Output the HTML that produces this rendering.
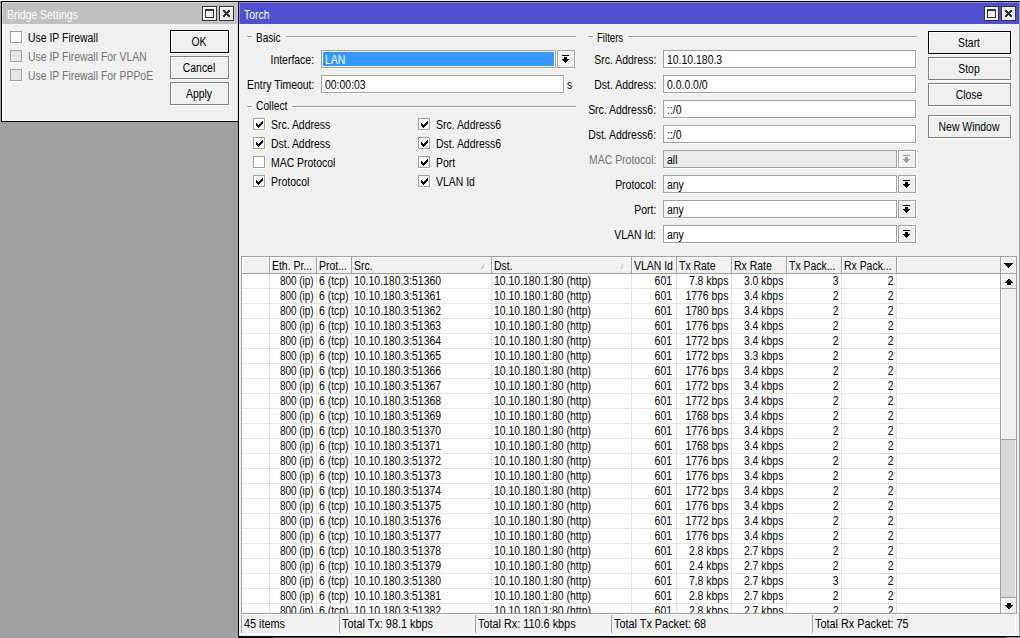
<!DOCTYPE html>
<html><head><meta charset="utf-8"><style>
html,body{margin:0;padding:0;width:1020px;height:638px;overflow:hidden;position:relative;background:#a0a0a0}
body div,body svg,body span{position:absolute;box-sizing:content-box}
.t{font-family:"Liberation Sans",sans-serif;font-size:12px;line-height:12px;white-space:nowrap;color:#000;transform:scaleX(0.87);transform-origin:0 0}
.t.r{transform-origin:100% 0}
.t.c{text-align:center;transform-origin:50% 0}
</style></head><body>
<div style="left:0px;top:0px;width:1020px;height:638px;background:#a0a0a0;"></div>
<div style="left:0px;top:0px;width:1020px;height:1px;background:#f6f6f6;"></div>
<div style="left:1px;top:1px;width:238px;height:121px;background:#000;"></div>
<div style="left:2px;top:2px;width:236px;height:119px;background:#ffffff;"></div>
<div style="left:3px;top:24px;width:234px;height:96px;background:#f0f0f0;"></div>
<div style="left:237px;top:24px;width:1px;height:97px;background:#d9d9d9;"></div>
<div style="left:2px;top:2px;width:236px;height:22px;background:#d4d4d4;"></div>
<div style="left:3px;top:3px;width:234px;height:21px;background:#c0c0c0;"></div>
<span class="t " style="left:7px;top:9px;color:#ffffff;">Bridge Settings</span>
<div style="left:202px;top:6px;width:13px;height:13px;border:1px solid #333333;background:#ececec;"></div>
<div style="left:203px;top:7px;width:13px;height:1px;background:#fff;"></div>
<div style="left:203px;top:7px;width:1px;height:13px;background:#fff;"></div>
<div style="left:205px;top:9px;width:7px;height:7px;border:1px solid #333333;background:#ececec;"></div>
<div style="left:205px;top:9px;width:9px;height:2px;background:#333333;"></div>
<div style="left:219px;top:6px;width:13px;height:13px;border:1px solid #333333;background:#ececec;"></div>
<div style="left:220px;top:7px;width:13px;height:1px;background:#fff;"></div>
<div style="left:220px;top:7px;width:1px;height:13px;background:#fff;"></div>
<svg style="left:223px;top:10px" width="7" height="7" viewBox="0 0 7 7" shape-rendering="crispEdges"><path d="M0 0h2v1h-2zM5 0h2v1h-2zM0 1h3v1h-3zM4 1h3v1h-3zM1 2h5v1h-5zM2 3h3v1h-3zM1 4h5v1h-5zM0 5h3v1h-3zM4 5h3v1h-3zM0 6h2v1h-2zM5 6h2v1h-2z" fill="#333"/></svg>
<div style="left:10px;top:31px;width:13px;height:13px;background:#ffffff;"></div>
<div style="left:10px;top:31px;width:10px;height:10px;border:1px solid #a0a0a0;background:#ffffff;"></div>
<span class="t " style="left:28px;top:32px;color:#000;">Use IP Firewall</span>
<div style="left:10px;top:50px;width:13px;height:13px;background:#ffffff;"></div>
<div style="left:10px;top:50px;width:10px;height:10px;border:1px solid #a0a0a0;background:#e6e6e6;"></div>
<span class="t " style="left:28px;top:51px;color:#737373;">Use IP Firewall For VLAN</span>
<div style="left:10px;top:69px;width:13px;height:13px;background:#ffffff;"></div>
<div style="left:10px;top:69px;width:10px;height:10px;border:1px solid #a0a0a0;background:#e6e6e6;"></div>
<span class="t " style="left:28px;top:70px;color:#737373;">Use IP Firewall For PPPoE</span>
<div style="left:170px;top:30px;width:60px;height:24px;background:#ffffff;"></div>
<div style="left:170px;top:30px;width:57px;height:21px;border:1px solid #000;background:#f0f0f0;"></div>
<div style="left:171px;top:31px;width:57px;height:1px;background:#fff;"></div>
<div style="left:171px;top:31px;width:1px;height:21px;background:#fff;"></div>
<span class="t c " style="left:99px;width:200px;top:36px;color:#000;">OK</span>
<div style="left:170px;top:56px;width:60px;height:24px;background:#ffffff;"></div>
<div style="left:170px;top:56px;width:57px;height:21px;border:1px solid #808080;background:#f0f0f0;"></div>
<div style="left:171px;top:57px;width:57px;height:1px;background:#fff;"></div>
<div style="left:171px;top:57px;width:1px;height:21px;background:#fff;"></div>
<span class="t c " style="left:99px;width:200px;top:62px;color:#000;">Cancel</span>
<div style="left:170px;top:82px;width:60px;height:24px;background:#ffffff;"></div>
<div style="left:170px;top:82px;width:57px;height:21px;border:1px solid #808080;background:#f0f0f0;"></div>
<div style="left:171px;top:83px;width:57px;height:1px;background:#fff;"></div>
<div style="left:171px;top:83px;width:1px;height:21px;background:#fff;"></div>
<span class="t c " style="left:99px;width:200px;top:88px;color:#000;">Apply</span>
<div style="left:238px;top:1px;width:782px;height:637px;background:#000;"></div>
<div style="left:239px;top:2px;width:781px;height:635px;background:#ffffff;"></div>
<div style="left:1019px;top:2px;width:1px;height:635px;background:#a0a0a0;"></div>
<div style="left:239px;top:24px;width:780px;height:611px;background:#f0f0f0;"></div>
<div style="left:239px;top:2px;width:780px;height:22px;background:#8a8add;"></div>
<div style="left:240px;top:3px;width:779px;height:21px;background:#4f50cc;"></div>
<span class="t " style="left:244px;top:9px;color:#ffffff;">Torch</span>
<div style="left:984px;top:6px;width:13px;height:13px;border:1px solid #333333;background:#ececec;"></div>
<div style="left:985px;top:7px;width:13px;height:1px;background:#fff;"></div>
<div style="left:985px;top:7px;width:1px;height:13px;background:#fff;"></div>
<div style="left:987px;top:9px;width:7px;height:7px;border:1px solid #333333;background:#ececec;"></div>
<div style="left:987px;top:9px;width:9px;height:2px;background:#333333;"></div>
<div style="left:1001px;top:6px;width:13px;height:13px;border:1px solid #333333;background:#ececec;"></div>
<div style="left:1002px;top:7px;width:13px;height:1px;background:#fff;"></div>
<div style="left:1002px;top:7px;width:1px;height:13px;background:#fff;"></div>
<svg style="left:1005px;top:10px" width="7" height="7" viewBox="0 0 7 7" shape-rendering="crispEdges"><path d="M0 0h2v1h-2zM5 0h2v1h-2zM0 1h3v1h-3zM4 1h3v1h-3zM1 2h5v1h-5zM2 3h3v1h-3zM1 4h5v1h-5zM0 5h3v1h-3zM4 5h3v1h-3zM0 6h2v1h-2zM5 6h2v1h-2z" fill="#333"/></svg>
<div style="left:247px;top:36px;width:5px;height:1px;background:#a0a0a0;"></div>
<div style="left:247px;top:37px;width:5px;height:1px;background:#fff;"></div>
<div style="left:286px;top:36px;width:290px;height:1px;background:#a0a0a0;"></div>
<div style="left:286px;top:37px;width:290px;height:1px;background:#fff;"></div>
<span class="t " style="left:256px;top:32px;color:#000;transform:scaleX(0.84);">Basic</span>
<div style="left:588px;top:36px;width:5px;height:1px;background:#a0a0a0;"></div>
<div style="left:588px;top:37px;width:5px;height:1px;background:#fff;"></div>
<div style="left:628px;top:36px;width:289px;height:1px;background:#a0a0a0;"></div>
<div style="left:628px;top:37px;width:289px;height:1px;background:#fff;"></div>
<span class="t " style="left:597px;top:32px;color:#000;transform:scaleX(0.8);">Filters</span>
<div style="left:247px;top:106px;width:5px;height:1px;background:#a0a0a0;"></div>
<div style="left:247px;top:107px;width:5px;height:1px;background:#fff;"></div>
<div style="left:292px;top:106px;width:284px;height:1px;background:#a0a0a0;"></div>
<div style="left:292px;top:107px;width:284px;height:1px;background:#fff;"></div>
<span class="t " style="left:256px;top:100px;color:#000;transform:scaleX(0.855);">Collect</span>
<span class="t r " style="right:706px;top:54px;color:#000;">Interface:</span>
<div style="left:321px;top:50px;width:236px;height:19px;background:#fff;"></div>
<div style="left:321px;top:50px;width:233px;height:16px;border:1px solid #a0a0a0;background:#fff;"></div>
<div style="left:323px;top:52px;width:231px;height:14px;background:#3399ff;"></div>
<span class="t " style="left:325px;top:54px;color:#fff;">LAN</span>
<div style="left:557px;top:50px;width:19px;height:19px;background:#fff;"></div>
<div style="left:557px;top:50px;width:16px;height:16px;border:1px solid #a0a0a0;background:#f0f0f0;"></div>
<div style="left:558px;top:51px;width:16px;height:1px;background:#fff;"></div>
<div style="left:558px;top:51px;width:1px;height:16px;background:#fff;"></div>
<svg style="left:562px;top:55px" width="7" height="8" viewBox="0 0 7 8" shape-rendering="crispEdges"><path d="M0 0h7v1h-7zM2 2h3v2h-3zM0 4h7v1h-7zM1 5h5v1h-5zM2 6h3v1h-3zM3 7h1v1h-1z" fill="#000"/></svg>
<span class="t r " style="right:706px;top:79px;color:#000;">Entry Timeout:</span>
<div style="left:321px;top:75px;width:244px;height:19px;background:#fff;"></div>
<div style="left:321px;top:75px;width:241px;height:16px;border:1px solid #a0a0a0;background:#fff;"></div>
<span class="t " style="left:325px;top:79px;color:#000;">00:00:03</span>
<span class="t " style="left:567px;top:79px;color:#000;">s</span>
<div style="left:253px;top:118px;width:13px;height:13px;background:#ffffff;"></div>
<div style="left:253px;top:118px;width:10px;height:10px;border:1px solid #a0a0a0;background:#ffffff;"></div>
<svg style="left:256px;top:121px" width="7" height="7" viewBox="0 0 7 7" shape-rendering="crispEdges"><path d="M6 0h1v1h-1zM5 1h2v1h-2zM0 2h1v1h-1zM4 2h3v1h-3zM0 3h2v1h-2zM3 3h3v1h-3zM0 4h5v1h-5zM1 5h3v1h-3zM2 6h1v1h-1z" fill="#000"/></svg>
<span class="t " style="left:271px;top:119px;color:#000;">Src. Address</span>
<div style="left:253px;top:137px;width:13px;height:13px;background:#ffffff;"></div>
<div style="left:253px;top:137px;width:10px;height:10px;border:1px solid #a0a0a0;background:#ffffff;"></div>
<svg style="left:256px;top:140px" width="7" height="7" viewBox="0 0 7 7" shape-rendering="crispEdges"><path d="M6 0h1v1h-1zM5 1h2v1h-2zM0 2h1v1h-1zM4 2h3v1h-3zM0 3h2v1h-2zM3 3h3v1h-3zM0 4h5v1h-5zM1 5h3v1h-3zM2 6h1v1h-1z" fill="#000"/></svg>
<span class="t " style="left:271px;top:138px;color:#000;">Dst. Address</span>
<div style="left:253px;top:156px;width:13px;height:13px;background:#ffffff;"></div>
<div style="left:253px;top:156px;width:10px;height:10px;border:1px solid #a0a0a0;background:#ffffff;"></div>
<span class="t " style="left:271px;top:157px;color:#000;">MAC Protocol</span>
<div style="left:253px;top:175px;width:13px;height:13px;background:#ffffff;"></div>
<div style="left:253px;top:175px;width:10px;height:10px;border:1px solid #a0a0a0;background:#ffffff;"></div>
<svg style="left:256px;top:178px" width="7" height="7" viewBox="0 0 7 7" shape-rendering="crispEdges"><path d="M6 0h1v1h-1zM5 1h2v1h-2zM0 2h1v1h-1zM4 2h3v1h-3zM0 3h2v1h-2zM3 3h3v1h-3zM0 4h5v1h-5zM1 5h3v1h-3zM2 6h1v1h-1z" fill="#000"/></svg>
<span class="t " style="left:271px;top:176px;color:#000;">Protocol</span>
<div style="left:418px;top:118px;width:13px;height:13px;background:#ffffff;"></div>
<div style="left:418px;top:118px;width:10px;height:10px;border:1px solid #a0a0a0;background:#ffffff;"></div>
<svg style="left:421px;top:121px" width="7" height="7" viewBox="0 0 7 7" shape-rendering="crispEdges"><path d="M6 0h1v1h-1zM5 1h2v1h-2zM0 2h1v1h-1zM4 2h3v1h-3zM0 3h2v1h-2zM3 3h3v1h-3zM0 4h5v1h-5zM1 5h3v1h-3zM2 6h1v1h-1z" fill="#000"/></svg>
<span class="t " style="left:436px;top:119px;color:#000;">Src. Address6</span>
<div style="left:418px;top:137px;width:13px;height:13px;background:#ffffff;"></div>
<div style="left:418px;top:137px;width:10px;height:10px;border:1px solid #a0a0a0;background:#ffffff;"></div>
<svg style="left:421px;top:140px" width="7" height="7" viewBox="0 0 7 7" shape-rendering="crispEdges"><path d="M6 0h1v1h-1zM5 1h2v1h-2zM0 2h1v1h-1zM4 2h3v1h-3zM0 3h2v1h-2zM3 3h3v1h-3zM0 4h5v1h-5zM1 5h3v1h-3zM2 6h1v1h-1z" fill="#000"/></svg>
<span class="t " style="left:436px;top:138px;color:#000;">Dst. Address6</span>
<div style="left:418px;top:156px;width:13px;height:13px;background:#ffffff;"></div>
<div style="left:418px;top:156px;width:10px;height:10px;border:1px solid #a0a0a0;background:#ffffff;"></div>
<svg style="left:421px;top:159px" width="7" height="7" viewBox="0 0 7 7" shape-rendering="crispEdges"><path d="M6 0h1v1h-1zM5 1h2v1h-2zM0 2h1v1h-1zM4 2h3v1h-3zM0 3h2v1h-2zM3 3h3v1h-3zM0 4h5v1h-5zM1 5h3v1h-3zM2 6h1v1h-1z" fill="#000"/></svg>
<span class="t " style="left:436px;top:157px;color:#000;">Port</span>
<div style="left:418px;top:175px;width:13px;height:13px;background:#ffffff;"></div>
<div style="left:418px;top:175px;width:10px;height:10px;border:1px solid #a0a0a0;background:#ffffff;"></div>
<svg style="left:421px;top:178px" width="7" height="7" viewBox="0 0 7 7" shape-rendering="crispEdges"><path d="M6 0h1v1h-1zM5 1h2v1h-2zM0 2h1v1h-1zM4 2h3v1h-3zM0 3h2v1h-2zM3 3h3v1h-3zM0 4h5v1h-5zM1 5h3v1h-3zM2 6h1v1h-1z" fill="#000"/></svg>
<span class="t " style="left:436px;top:176px;color:#000;">VLAN Id</span>
<span class="t r " style="right:364px;top:54px;color:#000;">Src. Address:</span>
<div style="left:663px;top:50px;width:254px;height:19px;background:#fff;"></div>
<div style="left:663px;top:50px;width:251px;height:16px;border:1px solid #a0a0a0;background:#fff;"></div>
<span class="t " style="left:667px;top:54px;color:#000;">10.10.180.3</span>
<span class="t r " style="right:364px;top:79px;color:#000;">Dst. Address:</span>
<div style="left:663px;top:75px;width:254px;height:19px;background:#fff;"></div>
<div style="left:663px;top:75px;width:251px;height:16px;border:1px solid #a0a0a0;background:#fff;"></div>
<span class="t " style="left:667px;top:79px;color:#000;">0.0.0.0/0</span>
<span class="t r " style="right:364px;top:104px;color:#000;">Src. Address6:</span>
<div style="left:663px;top:100px;width:254px;height:19px;background:#fff;"></div>
<div style="left:663px;top:100px;width:251px;height:16px;border:1px solid #a0a0a0;background:#fff;"></div>
<span class="t " style="left:667px;top:104px;color:#000;">::/0</span>
<span class="t r " style="right:364px;top:129px;color:#000;">Dst. Address6:</span>
<div style="left:663px;top:125px;width:254px;height:19px;background:#fff;"></div>
<div style="left:663px;top:125px;width:251px;height:16px;border:1px solid #a0a0a0;background:#fff;"></div>
<span class="t " style="left:667px;top:129px;color:#000;">::/0</span>
<span class="t r " style="right:364px;top:154px;color:#737373;">MAC Protocol:</span>
<div style="left:663px;top:150px;width:235px;height:19px;background:#fff;"></div>
<div style="left:663px;top:150px;width:232px;height:16px;border:1px solid #a0a0a0;background:#ececec;"></div>
<div style="left:898px;top:150px;width:19px;height:19px;background:#fff;"></div>
<div style="left:898px;top:150px;width:16px;height:16px;border:1px solid #a0a0a0;background:#f0f0f0;"></div>
<div style="left:899px;top:151px;width:16px;height:1px;background:#fff;"></div>
<div style="left:899px;top:151px;width:1px;height:16px;background:#fff;"></div>
<svg style="left:903px;top:155px" width="7" height="8" viewBox="0 0 7 8" shape-rendering="crispEdges"><path d="M0 0h7v1h-7zM2 2h3v2h-3zM0 4h7v1h-7zM1 5h5v1h-5zM2 6h3v1h-3zM3 7h1v1h-1z" fill="#a0a0a0"/></svg>
<span class="t " style="left:667px;top:154px;color:#000;">all</span>
<span class="t r " style="right:364px;top:179px;color:#000;">Protocol:</span>
<div style="left:663px;top:175px;width:235px;height:19px;background:#fff;"></div>
<div style="left:663px;top:175px;width:232px;height:16px;border:1px solid #a0a0a0;background:#fff;"></div>
<div style="left:898px;top:175px;width:19px;height:19px;background:#fff;"></div>
<div style="left:898px;top:175px;width:16px;height:16px;border:1px solid #a0a0a0;background:#f0f0f0;"></div>
<div style="left:899px;top:176px;width:16px;height:1px;background:#fff;"></div>
<div style="left:899px;top:176px;width:1px;height:16px;background:#fff;"></div>
<svg style="left:903px;top:180px" width="7" height="8" viewBox="0 0 7 8" shape-rendering="crispEdges"><path d="M0 0h7v1h-7zM2 2h3v2h-3zM0 4h7v1h-7zM1 5h5v1h-5zM2 6h3v1h-3zM3 7h1v1h-1z" fill="#000"/></svg>
<span class="t " style="left:667px;top:179px;color:#000;">any</span>
<span class="t r " style="right:364px;top:204px;color:#000;">Port:</span>
<div style="left:663px;top:200px;width:235px;height:19px;background:#fff;"></div>
<div style="left:663px;top:200px;width:232px;height:16px;border:1px solid #a0a0a0;background:#fff;"></div>
<div style="left:898px;top:200px;width:19px;height:19px;background:#fff;"></div>
<div style="left:898px;top:200px;width:16px;height:16px;border:1px solid #a0a0a0;background:#f0f0f0;"></div>
<div style="left:899px;top:201px;width:16px;height:1px;background:#fff;"></div>
<div style="left:899px;top:201px;width:1px;height:16px;background:#fff;"></div>
<svg style="left:903px;top:205px" width="7" height="8" viewBox="0 0 7 8" shape-rendering="crispEdges"><path d="M0 0h7v1h-7zM2 2h3v2h-3zM0 4h7v1h-7zM1 5h5v1h-5zM2 6h3v1h-3zM3 7h1v1h-1z" fill="#000"/></svg>
<span class="t " style="left:667px;top:204px;color:#000;">any</span>
<span class="t r " style="right:364px;top:229px;color:#000;">VLAN Id:</span>
<div style="left:663px;top:225px;width:235px;height:19px;background:#fff;"></div>
<div style="left:663px;top:225px;width:232px;height:16px;border:1px solid #a0a0a0;background:#fff;"></div>
<div style="left:898px;top:225px;width:19px;height:19px;background:#fff;"></div>
<div style="left:898px;top:225px;width:16px;height:16px;border:1px solid #a0a0a0;background:#f0f0f0;"></div>
<div style="left:899px;top:226px;width:16px;height:1px;background:#fff;"></div>
<div style="left:899px;top:226px;width:1px;height:16px;background:#fff;"></div>
<svg style="left:903px;top:230px" width="7" height="8" viewBox="0 0 7 8" shape-rendering="crispEdges"><path d="M0 0h7v1h-7zM2 2h3v2h-3zM0 4h7v1h-7zM1 5h5v1h-5zM2 6h3v1h-3zM3 7h1v1h-1z" fill="#000"/></svg>
<span class="t " style="left:667px;top:229px;color:#000;">any</span>
<div style="left:928px;top:31px;width:84px;height:24px;background:#ffffff;"></div>
<div style="left:928px;top:31px;width:81px;height:21px;border:1px solid #000;background:#f0f0f0;"></div>
<div style="left:929px;top:32px;width:81px;height:1px;background:#fff;"></div>
<div style="left:929px;top:32px;width:1px;height:21px;background:#fff;"></div>
<span class="t c " style="left:869px;width:200px;top:37px;color:#000;">Start</span>
<div style="left:928px;top:57px;width:84px;height:24px;background:#ffffff;"></div>
<div style="left:928px;top:57px;width:81px;height:21px;border:1px solid #808080;background:#f0f0f0;"></div>
<div style="left:929px;top:58px;width:81px;height:1px;background:#fff;"></div>
<div style="left:929px;top:58px;width:1px;height:21px;background:#fff;"></div>
<span class="t c " style="left:869px;width:200px;top:63px;color:#000;">Stop</span>
<div style="left:928px;top:83px;width:84px;height:24px;background:#ffffff;"></div>
<div style="left:928px;top:83px;width:81px;height:21px;border:1px solid #808080;background:#f0f0f0;"></div>
<div style="left:929px;top:84px;width:81px;height:1px;background:#fff;"></div>
<div style="left:929px;top:84px;width:1px;height:21px;background:#fff;"></div>
<span class="t c " style="left:869px;width:200px;top:89px;color:#000;">Close</span>
<div style="left:928px;top:115px;width:84px;height:24px;background:#ffffff;"></div>
<div style="left:928px;top:115px;width:81px;height:21px;border:1px solid #808080;background:#f0f0f0;"></div>
<div style="left:929px;top:116px;width:81px;height:1px;background:#fff;"></div>
<div style="left:929px;top:116px;width:1px;height:21px;background:#fff;"></div>
<span class="t c " style="left:869px;width:200px;top:121px;color:#000;">New Window</span>
<div style="left:241px;top:256px;width:776px;height:358px;background:#a0a0a0;"></div>
<div style="left:242px;top:257px;width:774px;height:356px;background:#ffffff;"></div>
<div style="left:242px;top:257px;width:774px;height:16px;background:#ffffff;"></div>
<div style="left:243px;top:258px;width:773px;height:15px;background:#f0f0f0;"></div>
<div style="left:242px;top:273px;width:774px;height:1px;background:#a0a0a0;"></div>
<div style="left:269px;top:257px;width:1px;height:16px;background:#a0a0a0;"></div>
<div style="left:270px;top:258px;width:1px;height:15px;background:#ffffff;"></div>
<div style="left:316px;top:257px;width:1px;height:16px;background:#a0a0a0;"></div>
<div style="left:317px;top:258px;width:1px;height:15px;background:#ffffff;"></div>
<div style="left:351px;top:257px;width:1px;height:16px;background:#a0a0a0;"></div>
<div style="left:352px;top:258px;width:1px;height:15px;background:#ffffff;"></div>
<div style="left:491px;top:257px;width:1px;height:16px;background:#a0a0a0;"></div>
<div style="left:492px;top:258px;width:1px;height:15px;background:#ffffff;"></div>
<div style="left:631px;top:257px;width:1px;height:16px;background:#a0a0a0;"></div>
<div style="left:632px;top:258px;width:1px;height:15px;background:#ffffff;"></div>
<div style="left:676px;top:257px;width:1px;height:16px;background:#a0a0a0;"></div>
<div style="left:677px;top:258px;width:1px;height:15px;background:#ffffff;"></div>
<div style="left:731px;top:257px;width:1px;height:16px;background:#a0a0a0;"></div>
<div style="left:732px;top:258px;width:1px;height:15px;background:#ffffff;"></div>
<div style="left:786px;top:257px;width:1px;height:16px;background:#a0a0a0;"></div>
<div style="left:787px;top:258px;width:1px;height:15px;background:#ffffff;"></div>
<div style="left:841px;top:257px;width:1px;height:16px;background:#a0a0a0;"></div>
<div style="left:842px;top:258px;width:1px;height:15px;background:#ffffff;"></div>
<div style="left:896px;top:257px;width:1px;height:16px;background:#a0a0a0;"></div>
<div style="left:897px;top:258px;width:1px;height:15px;background:#ffffff;"></div>
<span class="t " style="left:272px;top:260px;color:#000;">Eth. Pr...</span>
<span class="t " style="left:319px;top:260px;color:#000;">Prot...</span>
<span class="t " style="left:354px;top:260px;color:#000;">Src.</span>
<span class="t " style="left:494px;top:260px;color:#000;">Dst.</span>
<span class="t " style="left:634px;top:260px;color:#000;">VLAN Id</span>
<span class="t " style="left:679px;top:260px;color:#000;">Tx Rate</span>
<span class="t " style="left:734px;top:260px;color:#000;">Rx Rate</span>
<span class="t " style="left:789px;top:260px;color:#000;">Tx Pack...</span>
<span class="t " style="left:844px;top:260px;color:#000;">Rx Pack...</span>
<svg style="left:481px;top:263px" width="8" height="7" viewBox="0 0 8 7"><path d="M0.5 6.5L3.5 0.8" stroke="#b4b4b4" stroke-width="1.1" fill="none"/><path d="M3.5 0.8L7.5 6.5H0.5" stroke="#ffffff" stroke-width="1" fill="none"/></svg>
<svg style="left:620px;top:263px" width="8" height="7" viewBox="0 0 8 7"><path d="M0.5 6.5L3.5 0.8" stroke="#b4b4b4" stroke-width="1.1" fill="none"/><path d="M3.5 0.8L7.5 6.5H0.5" stroke="#ffffff" stroke-width="1" fill="none"/></svg>
<div style="left:1000px;top:257px;width:1px;height:16px;background:#a0a0a0;"></div>
<div style="left:1001px;top:258px;width:1px;height:15px;background:#fff;"></div>
<svg style="left:1004px;top:263px" width="9" height="5" viewBox="0 0 9 5" shape-rendering="crispEdges"><path d="M0 0h9v1h-9zM1 1h7v1h-7zM2 2h5v1h-5zM3 3h3v1h-3zM4 4h1v1h-1z" fill="#000"/></svg>
<div style="left:242px;top:274px;width:758px;height:339px;overflow:hidden">
<div style="left:0;top:14px;width:758px;height:1px;background:#e3e3e3"></div>
<div style="left:27px;top:0px;width:1px;height:15px;background:#e3e3e3"></div>
<div style="left:74px;top:0px;width:1px;height:15px;background:#e3e3e3"></div>
<div style="left:109px;top:0px;width:1px;height:15px;background:#e3e3e3"></div>
<div style="left:249px;top:0px;width:1px;height:15px;background:#e3e3e3"></div>
<div style="left:389px;top:0px;width:1px;height:15px;background:#e3e3e3"></div>
<div style="left:434px;top:0px;width:1px;height:15px;background:#e3e3e3"></div>
<div style="left:489px;top:0px;width:1px;height:15px;background:#e3e3e3"></div>
<div style="left:544px;top:0px;width:1px;height:15px;background:#e3e3e3"></div>
<div style="left:599px;top:0px;width:1px;height:15px;background:#e3e3e3"></div>
<div style="left:654px;top:0px;width:1px;height:15px;background:#e3e3e3"></div>
<span class="t r" style="right:686px;top:1px;transform:scaleX(0.83);">800 (ip)</span>
<span class="t" style="left:77px;top:1px">6 (tcp)</span>
<span class="t" style="left:112px;top:1px">10.10.180.3:51360</span>
<span class="t" style="left:252px;top:1px">10.10.180.1:80 (http)</span>
<span class="t r" style="right:328px;top:1px;">601</span>
<span class="t r" style="right:272px;top:1px;">7.8 kbps</span>
<span class="t r" style="right:217px;top:1px;">3.0 kbps</span>
<span class="t r" style="right:161px;top:1px;">3</span>
<span class="t r" style="right:106px;top:1px;">2</span>
<div style="left:0;top:29px;width:758px;height:1px;background:#e3e3e3"></div>
<div style="left:27px;top:15px;width:1px;height:15px;background:#e3e3e3"></div>
<div style="left:74px;top:15px;width:1px;height:15px;background:#e3e3e3"></div>
<div style="left:109px;top:15px;width:1px;height:15px;background:#e3e3e3"></div>
<div style="left:249px;top:15px;width:1px;height:15px;background:#e3e3e3"></div>
<div style="left:389px;top:15px;width:1px;height:15px;background:#e3e3e3"></div>
<div style="left:434px;top:15px;width:1px;height:15px;background:#e3e3e3"></div>
<div style="left:489px;top:15px;width:1px;height:15px;background:#e3e3e3"></div>
<div style="left:544px;top:15px;width:1px;height:15px;background:#e3e3e3"></div>
<div style="left:599px;top:15px;width:1px;height:15px;background:#e3e3e3"></div>
<div style="left:654px;top:15px;width:1px;height:15px;background:#e3e3e3"></div>
<span class="t r" style="right:686px;top:16px;transform:scaleX(0.83);">800 (ip)</span>
<span class="t" style="left:77px;top:16px">6 (tcp)</span>
<span class="t" style="left:112px;top:16px">10.10.180.3:51361</span>
<span class="t" style="left:252px;top:16px">10.10.180.1:80 (http)</span>
<span class="t r" style="right:328px;top:16px;">601</span>
<span class="t r" style="right:272px;top:16px;">1776 bps</span>
<span class="t r" style="right:217px;top:16px;">3.4 kbps</span>
<span class="t r" style="right:161px;top:16px;">2</span>
<span class="t r" style="right:106px;top:16px;">2</span>
<div style="left:0;top:44px;width:758px;height:1px;background:#e3e3e3"></div>
<div style="left:27px;top:30px;width:1px;height:15px;background:#e3e3e3"></div>
<div style="left:74px;top:30px;width:1px;height:15px;background:#e3e3e3"></div>
<div style="left:109px;top:30px;width:1px;height:15px;background:#e3e3e3"></div>
<div style="left:249px;top:30px;width:1px;height:15px;background:#e3e3e3"></div>
<div style="left:389px;top:30px;width:1px;height:15px;background:#e3e3e3"></div>
<div style="left:434px;top:30px;width:1px;height:15px;background:#e3e3e3"></div>
<div style="left:489px;top:30px;width:1px;height:15px;background:#e3e3e3"></div>
<div style="left:544px;top:30px;width:1px;height:15px;background:#e3e3e3"></div>
<div style="left:599px;top:30px;width:1px;height:15px;background:#e3e3e3"></div>
<div style="left:654px;top:30px;width:1px;height:15px;background:#e3e3e3"></div>
<span class="t r" style="right:686px;top:31px;transform:scaleX(0.83);">800 (ip)</span>
<span class="t" style="left:77px;top:31px">6 (tcp)</span>
<span class="t" style="left:112px;top:31px">10.10.180.3:51362</span>
<span class="t" style="left:252px;top:31px">10.10.180.1:80 (http)</span>
<span class="t r" style="right:328px;top:31px;">601</span>
<span class="t r" style="right:272px;top:31px;">1780 bps</span>
<span class="t r" style="right:217px;top:31px;">3.4 kbps</span>
<span class="t r" style="right:161px;top:31px;">2</span>
<span class="t r" style="right:106px;top:31px;">2</span>
<div style="left:0;top:59px;width:758px;height:1px;background:#e3e3e3"></div>
<div style="left:27px;top:45px;width:1px;height:15px;background:#e3e3e3"></div>
<div style="left:74px;top:45px;width:1px;height:15px;background:#e3e3e3"></div>
<div style="left:109px;top:45px;width:1px;height:15px;background:#e3e3e3"></div>
<div style="left:249px;top:45px;width:1px;height:15px;background:#e3e3e3"></div>
<div style="left:389px;top:45px;width:1px;height:15px;background:#e3e3e3"></div>
<div style="left:434px;top:45px;width:1px;height:15px;background:#e3e3e3"></div>
<div style="left:489px;top:45px;width:1px;height:15px;background:#e3e3e3"></div>
<div style="left:544px;top:45px;width:1px;height:15px;background:#e3e3e3"></div>
<div style="left:599px;top:45px;width:1px;height:15px;background:#e3e3e3"></div>
<div style="left:654px;top:45px;width:1px;height:15px;background:#e3e3e3"></div>
<span class="t r" style="right:686px;top:46px;transform:scaleX(0.83);">800 (ip)</span>
<span class="t" style="left:77px;top:46px">6 (tcp)</span>
<span class="t" style="left:112px;top:46px">10.10.180.3:51363</span>
<span class="t" style="left:252px;top:46px">10.10.180.1:80 (http)</span>
<span class="t r" style="right:328px;top:46px;">601</span>
<span class="t r" style="right:272px;top:46px;">1776 bps</span>
<span class="t r" style="right:217px;top:46px;">3.4 kbps</span>
<span class="t r" style="right:161px;top:46px;">2</span>
<span class="t r" style="right:106px;top:46px;">2</span>
<div style="left:0;top:74px;width:758px;height:1px;background:#e3e3e3"></div>
<div style="left:27px;top:60px;width:1px;height:15px;background:#e3e3e3"></div>
<div style="left:74px;top:60px;width:1px;height:15px;background:#e3e3e3"></div>
<div style="left:109px;top:60px;width:1px;height:15px;background:#e3e3e3"></div>
<div style="left:249px;top:60px;width:1px;height:15px;background:#e3e3e3"></div>
<div style="left:389px;top:60px;width:1px;height:15px;background:#e3e3e3"></div>
<div style="left:434px;top:60px;width:1px;height:15px;background:#e3e3e3"></div>
<div style="left:489px;top:60px;width:1px;height:15px;background:#e3e3e3"></div>
<div style="left:544px;top:60px;width:1px;height:15px;background:#e3e3e3"></div>
<div style="left:599px;top:60px;width:1px;height:15px;background:#e3e3e3"></div>
<div style="left:654px;top:60px;width:1px;height:15px;background:#e3e3e3"></div>
<span class="t r" style="right:686px;top:61px;transform:scaleX(0.83);">800 (ip)</span>
<span class="t" style="left:77px;top:61px">6 (tcp)</span>
<span class="t" style="left:112px;top:61px">10.10.180.3:51364</span>
<span class="t" style="left:252px;top:61px">10.10.180.1:80 (http)</span>
<span class="t r" style="right:328px;top:61px;">601</span>
<span class="t r" style="right:272px;top:61px;">1772 bps</span>
<span class="t r" style="right:217px;top:61px;">3.4 kbps</span>
<span class="t r" style="right:161px;top:61px;">2</span>
<span class="t r" style="right:106px;top:61px;">2</span>
<div style="left:0;top:89px;width:758px;height:1px;background:#e3e3e3"></div>
<div style="left:27px;top:75px;width:1px;height:15px;background:#e3e3e3"></div>
<div style="left:74px;top:75px;width:1px;height:15px;background:#e3e3e3"></div>
<div style="left:109px;top:75px;width:1px;height:15px;background:#e3e3e3"></div>
<div style="left:249px;top:75px;width:1px;height:15px;background:#e3e3e3"></div>
<div style="left:389px;top:75px;width:1px;height:15px;background:#e3e3e3"></div>
<div style="left:434px;top:75px;width:1px;height:15px;background:#e3e3e3"></div>
<div style="left:489px;top:75px;width:1px;height:15px;background:#e3e3e3"></div>
<div style="left:544px;top:75px;width:1px;height:15px;background:#e3e3e3"></div>
<div style="left:599px;top:75px;width:1px;height:15px;background:#e3e3e3"></div>
<div style="left:654px;top:75px;width:1px;height:15px;background:#e3e3e3"></div>
<span class="t r" style="right:686px;top:76px;transform:scaleX(0.83);">800 (ip)</span>
<span class="t" style="left:77px;top:76px">6 (tcp)</span>
<span class="t" style="left:112px;top:76px">10.10.180.3:51365</span>
<span class="t" style="left:252px;top:76px">10.10.180.1:80 (http)</span>
<span class="t r" style="right:328px;top:76px;">601</span>
<span class="t r" style="right:272px;top:76px;">1772 bps</span>
<span class="t r" style="right:217px;top:76px;">3.3 kbps</span>
<span class="t r" style="right:161px;top:76px;">2</span>
<span class="t r" style="right:106px;top:76px;">2</span>
<div style="left:0;top:104px;width:758px;height:1px;background:#e3e3e3"></div>
<div style="left:27px;top:90px;width:1px;height:15px;background:#e3e3e3"></div>
<div style="left:74px;top:90px;width:1px;height:15px;background:#e3e3e3"></div>
<div style="left:109px;top:90px;width:1px;height:15px;background:#e3e3e3"></div>
<div style="left:249px;top:90px;width:1px;height:15px;background:#e3e3e3"></div>
<div style="left:389px;top:90px;width:1px;height:15px;background:#e3e3e3"></div>
<div style="left:434px;top:90px;width:1px;height:15px;background:#e3e3e3"></div>
<div style="left:489px;top:90px;width:1px;height:15px;background:#e3e3e3"></div>
<div style="left:544px;top:90px;width:1px;height:15px;background:#e3e3e3"></div>
<div style="left:599px;top:90px;width:1px;height:15px;background:#e3e3e3"></div>
<div style="left:654px;top:90px;width:1px;height:15px;background:#e3e3e3"></div>
<span class="t r" style="right:686px;top:91px;transform:scaleX(0.83);">800 (ip)</span>
<span class="t" style="left:77px;top:91px">6 (tcp)</span>
<span class="t" style="left:112px;top:91px">10.10.180.3:51366</span>
<span class="t" style="left:252px;top:91px">10.10.180.1:80 (http)</span>
<span class="t r" style="right:328px;top:91px;">601</span>
<span class="t r" style="right:272px;top:91px;">1776 bps</span>
<span class="t r" style="right:217px;top:91px;">3.4 kbps</span>
<span class="t r" style="right:161px;top:91px;">2</span>
<span class="t r" style="right:106px;top:91px;">2</span>
<div style="left:0;top:119px;width:758px;height:1px;background:#e3e3e3"></div>
<div style="left:27px;top:105px;width:1px;height:15px;background:#e3e3e3"></div>
<div style="left:74px;top:105px;width:1px;height:15px;background:#e3e3e3"></div>
<div style="left:109px;top:105px;width:1px;height:15px;background:#e3e3e3"></div>
<div style="left:249px;top:105px;width:1px;height:15px;background:#e3e3e3"></div>
<div style="left:389px;top:105px;width:1px;height:15px;background:#e3e3e3"></div>
<div style="left:434px;top:105px;width:1px;height:15px;background:#e3e3e3"></div>
<div style="left:489px;top:105px;width:1px;height:15px;background:#e3e3e3"></div>
<div style="left:544px;top:105px;width:1px;height:15px;background:#e3e3e3"></div>
<div style="left:599px;top:105px;width:1px;height:15px;background:#e3e3e3"></div>
<div style="left:654px;top:105px;width:1px;height:15px;background:#e3e3e3"></div>
<span class="t r" style="right:686px;top:106px;transform:scaleX(0.83);">800 (ip)</span>
<span class="t" style="left:77px;top:106px">6 (tcp)</span>
<span class="t" style="left:112px;top:106px">10.10.180.3:51367</span>
<span class="t" style="left:252px;top:106px">10.10.180.1:80 (http)</span>
<span class="t r" style="right:328px;top:106px;">601</span>
<span class="t r" style="right:272px;top:106px;">1772 bps</span>
<span class="t r" style="right:217px;top:106px;">3.4 kbps</span>
<span class="t r" style="right:161px;top:106px;">2</span>
<span class="t r" style="right:106px;top:106px;">2</span>
<div style="left:0;top:134px;width:758px;height:1px;background:#e3e3e3"></div>
<div style="left:27px;top:120px;width:1px;height:15px;background:#e3e3e3"></div>
<div style="left:74px;top:120px;width:1px;height:15px;background:#e3e3e3"></div>
<div style="left:109px;top:120px;width:1px;height:15px;background:#e3e3e3"></div>
<div style="left:249px;top:120px;width:1px;height:15px;background:#e3e3e3"></div>
<div style="left:389px;top:120px;width:1px;height:15px;background:#e3e3e3"></div>
<div style="left:434px;top:120px;width:1px;height:15px;background:#e3e3e3"></div>
<div style="left:489px;top:120px;width:1px;height:15px;background:#e3e3e3"></div>
<div style="left:544px;top:120px;width:1px;height:15px;background:#e3e3e3"></div>
<div style="left:599px;top:120px;width:1px;height:15px;background:#e3e3e3"></div>
<div style="left:654px;top:120px;width:1px;height:15px;background:#e3e3e3"></div>
<span class="t r" style="right:686px;top:121px;transform:scaleX(0.83);">800 (ip)</span>
<span class="t" style="left:77px;top:121px">6 (tcp)</span>
<span class="t" style="left:112px;top:121px">10.10.180.3:51368</span>
<span class="t" style="left:252px;top:121px">10.10.180.1:80 (http)</span>
<span class="t r" style="right:328px;top:121px;">601</span>
<span class="t r" style="right:272px;top:121px;">1772 bps</span>
<span class="t r" style="right:217px;top:121px;">3.4 kbps</span>
<span class="t r" style="right:161px;top:121px;">2</span>
<span class="t r" style="right:106px;top:121px;">2</span>
<div style="left:0;top:149px;width:758px;height:1px;background:#e3e3e3"></div>
<div style="left:27px;top:135px;width:1px;height:15px;background:#e3e3e3"></div>
<div style="left:74px;top:135px;width:1px;height:15px;background:#e3e3e3"></div>
<div style="left:109px;top:135px;width:1px;height:15px;background:#e3e3e3"></div>
<div style="left:249px;top:135px;width:1px;height:15px;background:#e3e3e3"></div>
<div style="left:389px;top:135px;width:1px;height:15px;background:#e3e3e3"></div>
<div style="left:434px;top:135px;width:1px;height:15px;background:#e3e3e3"></div>
<div style="left:489px;top:135px;width:1px;height:15px;background:#e3e3e3"></div>
<div style="left:544px;top:135px;width:1px;height:15px;background:#e3e3e3"></div>
<div style="left:599px;top:135px;width:1px;height:15px;background:#e3e3e3"></div>
<div style="left:654px;top:135px;width:1px;height:15px;background:#e3e3e3"></div>
<span class="t r" style="right:686px;top:136px;transform:scaleX(0.83);">800 (ip)</span>
<span class="t" style="left:77px;top:136px">6 (tcp)</span>
<span class="t" style="left:112px;top:136px">10.10.180.3:51369</span>
<span class="t" style="left:252px;top:136px">10.10.180.1:80 (http)</span>
<span class="t r" style="right:328px;top:136px;">601</span>
<span class="t r" style="right:272px;top:136px;">1768 bps</span>
<span class="t r" style="right:217px;top:136px;">3.4 kbps</span>
<span class="t r" style="right:161px;top:136px;">2</span>
<span class="t r" style="right:106px;top:136px;">2</span>
<div style="left:0;top:164px;width:758px;height:1px;background:#e3e3e3"></div>
<div style="left:27px;top:150px;width:1px;height:15px;background:#e3e3e3"></div>
<div style="left:74px;top:150px;width:1px;height:15px;background:#e3e3e3"></div>
<div style="left:109px;top:150px;width:1px;height:15px;background:#e3e3e3"></div>
<div style="left:249px;top:150px;width:1px;height:15px;background:#e3e3e3"></div>
<div style="left:389px;top:150px;width:1px;height:15px;background:#e3e3e3"></div>
<div style="left:434px;top:150px;width:1px;height:15px;background:#e3e3e3"></div>
<div style="left:489px;top:150px;width:1px;height:15px;background:#e3e3e3"></div>
<div style="left:544px;top:150px;width:1px;height:15px;background:#e3e3e3"></div>
<div style="left:599px;top:150px;width:1px;height:15px;background:#e3e3e3"></div>
<div style="left:654px;top:150px;width:1px;height:15px;background:#e3e3e3"></div>
<span class="t r" style="right:686px;top:151px;transform:scaleX(0.83);">800 (ip)</span>
<span class="t" style="left:77px;top:151px">6 (tcp)</span>
<span class="t" style="left:112px;top:151px">10.10.180.3:51370</span>
<span class="t" style="left:252px;top:151px">10.10.180.1:80 (http)</span>
<span class="t r" style="right:328px;top:151px;">601</span>
<span class="t r" style="right:272px;top:151px;">1776 bps</span>
<span class="t r" style="right:217px;top:151px;">3.4 kbps</span>
<span class="t r" style="right:161px;top:151px;">2</span>
<span class="t r" style="right:106px;top:151px;">2</span>
<div style="left:0;top:179px;width:758px;height:1px;background:#e3e3e3"></div>
<div style="left:27px;top:165px;width:1px;height:15px;background:#e3e3e3"></div>
<div style="left:74px;top:165px;width:1px;height:15px;background:#e3e3e3"></div>
<div style="left:109px;top:165px;width:1px;height:15px;background:#e3e3e3"></div>
<div style="left:249px;top:165px;width:1px;height:15px;background:#e3e3e3"></div>
<div style="left:389px;top:165px;width:1px;height:15px;background:#e3e3e3"></div>
<div style="left:434px;top:165px;width:1px;height:15px;background:#e3e3e3"></div>
<div style="left:489px;top:165px;width:1px;height:15px;background:#e3e3e3"></div>
<div style="left:544px;top:165px;width:1px;height:15px;background:#e3e3e3"></div>
<div style="left:599px;top:165px;width:1px;height:15px;background:#e3e3e3"></div>
<div style="left:654px;top:165px;width:1px;height:15px;background:#e3e3e3"></div>
<span class="t r" style="right:686px;top:166px;transform:scaleX(0.83);">800 (ip)</span>
<span class="t" style="left:77px;top:166px">6 (tcp)</span>
<span class="t" style="left:112px;top:166px">10.10.180.3:51371</span>
<span class="t" style="left:252px;top:166px">10.10.180.1:80 (http)</span>
<span class="t r" style="right:328px;top:166px;">601</span>
<span class="t r" style="right:272px;top:166px;">1768 bps</span>
<span class="t r" style="right:217px;top:166px;">3.4 kbps</span>
<span class="t r" style="right:161px;top:166px;">2</span>
<span class="t r" style="right:106px;top:166px;">2</span>
<div style="left:0;top:194px;width:758px;height:1px;background:#e3e3e3"></div>
<div style="left:27px;top:180px;width:1px;height:15px;background:#e3e3e3"></div>
<div style="left:74px;top:180px;width:1px;height:15px;background:#e3e3e3"></div>
<div style="left:109px;top:180px;width:1px;height:15px;background:#e3e3e3"></div>
<div style="left:249px;top:180px;width:1px;height:15px;background:#e3e3e3"></div>
<div style="left:389px;top:180px;width:1px;height:15px;background:#e3e3e3"></div>
<div style="left:434px;top:180px;width:1px;height:15px;background:#e3e3e3"></div>
<div style="left:489px;top:180px;width:1px;height:15px;background:#e3e3e3"></div>
<div style="left:544px;top:180px;width:1px;height:15px;background:#e3e3e3"></div>
<div style="left:599px;top:180px;width:1px;height:15px;background:#e3e3e3"></div>
<div style="left:654px;top:180px;width:1px;height:15px;background:#e3e3e3"></div>
<span class="t r" style="right:686px;top:181px;transform:scaleX(0.83);">800 (ip)</span>
<span class="t" style="left:77px;top:181px">6 (tcp)</span>
<span class="t" style="left:112px;top:181px">10.10.180.3:51372</span>
<span class="t" style="left:252px;top:181px">10.10.180.1:80 (http)</span>
<span class="t r" style="right:328px;top:181px;">601</span>
<span class="t r" style="right:272px;top:181px;">1776 bps</span>
<span class="t r" style="right:217px;top:181px;">3.4 kbps</span>
<span class="t r" style="right:161px;top:181px;">2</span>
<span class="t r" style="right:106px;top:181px;">2</span>
<div style="left:0;top:209px;width:758px;height:1px;background:#e3e3e3"></div>
<div style="left:27px;top:195px;width:1px;height:15px;background:#e3e3e3"></div>
<div style="left:74px;top:195px;width:1px;height:15px;background:#e3e3e3"></div>
<div style="left:109px;top:195px;width:1px;height:15px;background:#e3e3e3"></div>
<div style="left:249px;top:195px;width:1px;height:15px;background:#e3e3e3"></div>
<div style="left:389px;top:195px;width:1px;height:15px;background:#e3e3e3"></div>
<div style="left:434px;top:195px;width:1px;height:15px;background:#e3e3e3"></div>
<div style="left:489px;top:195px;width:1px;height:15px;background:#e3e3e3"></div>
<div style="left:544px;top:195px;width:1px;height:15px;background:#e3e3e3"></div>
<div style="left:599px;top:195px;width:1px;height:15px;background:#e3e3e3"></div>
<div style="left:654px;top:195px;width:1px;height:15px;background:#e3e3e3"></div>
<span class="t r" style="right:686px;top:196px;transform:scaleX(0.83);">800 (ip)</span>
<span class="t" style="left:77px;top:196px">6 (tcp)</span>
<span class="t" style="left:112px;top:196px">10.10.180.3:51373</span>
<span class="t" style="left:252px;top:196px">10.10.180.1:80 (http)</span>
<span class="t r" style="right:328px;top:196px;">601</span>
<span class="t r" style="right:272px;top:196px;">1776 bps</span>
<span class="t r" style="right:217px;top:196px;">3.4 kbps</span>
<span class="t r" style="right:161px;top:196px;">2</span>
<span class="t r" style="right:106px;top:196px;">2</span>
<div style="left:0;top:224px;width:758px;height:1px;background:#e3e3e3"></div>
<div style="left:27px;top:210px;width:1px;height:15px;background:#e3e3e3"></div>
<div style="left:74px;top:210px;width:1px;height:15px;background:#e3e3e3"></div>
<div style="left:109px;top:210px;width:1px;height:15px;background:#e3e3e3"></div>
<div style="left:249px;top:210px;width:1px;height:15px;background:#e3e3e3"></div>
<div style="left:389px;top:210px;width:1px;height:15px;background:#e3e3e3"></div>
<div style="left:434px;top:210px;width:1px;height:15px;background:#e3e3e3"></div>
<div style="left:489px;top:210px;width:1px;height:15px;background:#e3e3e3"></div>
<div style="left:544px;top:210px;width:1px;height:15px;background:#e3e3e3"></div>
<div style="left:599px;top:210px;width:1px;height:15px;background:#e3e3e3"></div>
<div style="left:654px;top:210px;width:1px;height:15px;background:#e3e3e3"></div>
<span class="t r" style="right:686px;top:211px;transform:scaleX(0.83);">800 (ip)</span>
<span class="t" style="left:77px;top:211px">6 (tcp)</span>
<span class="t" style="left:112px;top:211px">10.10.180.3:51374</span>
<span class="t" style="left:252px;top:211px">10.10.180.1:80 (http)</span>
<span class="t r" style="right:328px;top:211px;">601</span>
<span class="t r" style="right:272px;top:211px;">1772 bps</span>
<span class="t r" style="right:217px;top:211px;">3.4 kbps</span>
<span class="t r" style="right:161px;top:211px;">2</span>
<span class="t r" style="right:106px;top:211px;">2</span>
<div style="left:0;top:239px;width:758px;height:1px;background:#e3e3e3"></div>
<div style="left:27px;top:225px;width:1px;height:15px;background:#e3e3e3"></div>
<div style="left:74px;top:225px;width:1px;height:15px;background:#e3e3e3"></div>
<div style="left:109px;top:225px;width:1px;height:15px;background:#e3e3e3"></div>
<div style="left:249px;top:225px;width:1px;height:15px;background:#e3e3e3"></div>
<div style="left:389px;top:225px;width:1px;height:15px;background:#e3e3e3"></div>
<div style="left:434px;top:225px;width:1px;height:15px;background:#e3e3e3"></div>
<div style="left:489px;top:225px;width:1px;height:15px;background:#e3e3e3"></div>
<div style="left:544px;top:225px;width:1px;height:15px;background:#e3e3e3"></div>
<div style="left:599px;top:225px;width:1px;height:15px;background:#e3e3e3"></div>
<div style="left:654px;top:225px;width:1px;height:15px;background:#e3e3e3"></div>
<span class="t r" style="right:686px;top:226px;transform:scaleX(0.83);">800 (ip)</span>
<span class="t" style="left:77px;top:226px">6 (tcp)</span>
<span class="t" style="left:112px;top:226px">10.10.180.3:51375</span>
<span class="t" style="left:252px;top:226px">10.10.180.1:80 (http)</span>
<span class="t r" style="right:328px;top:226px;">601</span>
<span class="t r" style="right:272px;top:226px;">1776 bps</span>
<span class="t r" style="right:217px;top:226px;">3.4 kbps</span>
<span class="t r" style="right:161px;top:226px;">2</span>
<span class="t r" style="right:106px;top:226px;">2</span>
<div style="left:0;top:254px;width:758px;height:1px;background:#e3e3e3"></div>
<div style="left:27px;top:240px;width:1px;height:15px;background:#e3e3e3"></div>
<div style="left:74px;top:240px;width:1px;height:15px;background:#e3e3e3"></div>
<div style="left:109px;top:240px;width:1px;height:15px;background:#e3e3e3"></div>
<div style="left:249px;top:240px;width:1px;height:15px;background:#e3e3e3"></div>
<div style="left:389px;top:240px;width:1px;height:15px;background:#e3e3e3"></div>
<div style="left:434px;top:240px;width:1px;height:15px;background:#e3e3e3"></div>
<div style="left:489px;top:240px;width:1px;height:15px;background:#e3e3e3"></div>
<div style="left:544px;top:240px;width:1px;height:15px;background:#e3e3e3"></div>
<div style="left:599px;top:240px;width:1px;height:15px;background:#e3e3e3"></div>
<div style="left:654px;top:240px;width:1px;height:15px;background:#e3e3e3"></div>
<span class="t r" style="right:686px;top:241px;transform:scaleX(0.83);">800 (ip)</span>
<span class="t" style="left:77px;top:241px">6 (tcp)</span>
<span class="t" style="left:112px;top:241px">10.10.180.3:51376</span>
<span class="t" style="left:252px;top:241px">10.10.180.1:80 (http)</span>
<span class="t r" style="right:328px;top:241px;">601</span>
<span class="t r" style="right:272px;top:241px;">1772 bps</span>
<span class="t r" style="right:217px;top:241px;">3.4 kbps</span>
<span class="t r" style="right:161px;top:241px;">2</span>
<span class="t r" style="right:106px;top:241px;">2</span>
<div style="left:0;top:269px;width:758px;height:1px;background:#e3e3e3"></div>
<div style="left:27px;top:255px;width:1px;height:15px;background:#e3e3e3"></div>
<div style="left:74px;top:255px;width:1px;height:15px;background:#e3e3e3"></div>
<div style="left:109px;top:255px;width:1px;height:15px;background:#e3e3e3"></div>
<div style="left:249px;top:255px;width:1px;height:15px;background:#e3e3e3"></div>
<div style="left:389px;top:255px;width:1px;height:15px;background:#e3e3e3"></div>
<div style="left:434px;top:255px;width:1px;height:15px;background:#e3e3e3"></div>
<div style="left:489px;top:255px;width:1px;height:15px;background:#e3e3e3"></div>
<div style="left:544px;top:255px;width:1px;height:15px;background:#e3e3e3"></div>
<div style="left:599px;top:255px;width:1px;height:15px;background:#e3e3e3"></div>
<div style="left:654px;top:255px;width:1px;height:15px;background:#e3e3e3"></div>
<span class="t r" style="right:686px;top:256px;transform:scaleX(0.83);">800 (ip)</span>
<span class="t" style="left:77px;top:256px">6 (tcp)</span>
<span class="t" style="left:112px;top:256px">10.10.180.3:51377</span>
<span class="t" style="left:252px;top:256px">10.10.180.1:80 (http)</span>
<span class="t r" style="right:328px;top:256px;">601</span>
<span class="t r" style="right:272px;top:256px;">1776 bps</span>
<span class="t r" style="right:217px;top:256px;">3.4 kbps</span>
<span class="t r" style="right:161px;top:256px;">2</span>
<span class="t r" style="right:106px;top:256px;">2</span>
<div style="left:0;top:284px;width:758px;height:1px;background:#e3e3e3"></div>
<div style="left:27px;top:270px;width:1px;height:15px;background:#e3e3e3"></div>
<div style="left:74px;top:270px;width:1px;height:15px;background:#e3e3e3"></div>
<div style="left:109px;top:270px;width:1px;height:15px;background:#e3e3e3"></div>
<div style="left:249px;top:270px;width:1px;height:15px;background:#e3e3e3"></div>
<div style="left:389px;top:270px;width:1px;height:15px;background:#e3e3e3"></div>
<div style="left:434px;top:270px;width:1px;height:15px;background:#e3e3e3"></div>
<div style="left:489px;top:270px;width:1px;height:15px;background:#e3e3e3"></div>
<div style="left:544px;top:270px;width:1px;height:15px;background:#e3e3e3"></div>
<div style="left:599px;top:270px;width:1px;height:15px;background:#e3e3e3"></div>
<div style="left:654px;top:270px;width:1px;height:15px;background:#e3e3e3"></div>
<span class="t r" style="right:686px;top:271px;transform:scaleX(0.83);">800 (ip)</span>
<span class="t" style="left:77px;top:271px">6 (tcp)</span>
<span class="t" style="left:112px;top:271px">10.10.180.3:51378</span>
<span class="t" style="left:252px;top:271px">10.10.180.1:80 (http)</span>
<span class="t r" style="right:328px;top:271px;">601</span>
<span class="t r" style="right:272px;top:271px;">2.8 kbps</span>
<span class="t r" style="right:217px;top:271px;">2.7 kbps</span>
<span class="t r" style="right:161px;top:271px;">2</span>
<span class="t r" style="right:106px;top:271px;">2</span>
<div style="left:0;top:299px;width:758px;height:1px;background:#e3e3e3"></div>
<div style="left:27px;top:285px;width:1px;height:15px;background:#e3e3e3"></div>
<div style="left:74px;top:285px;width:1px;height:15px;background:#e3e3e3"></div>
<div style="left:109px;top:285px;width:1px;height:15px;background:#e3e3e3"></div>
<div style="left:249px;top:285px;width:1px;height:15px;background:#e3e3e3"></div>
<div style="left:389px;top:285px;width:1px;height:15px;background:#e3e3e3"></div>
<div style="left:434px;top:285px;width:1px;height:15px;background:#e3e3e3"></div>
<div style="left:489px;top:285px;width:1px;height:15px;background:#e3e3e3"></div>
<div style="left:544px;top:285px;width:1px;height:15px;background:#e3e3e3"></div>
<div style="left:599px;top:285px;width:1px;height:15px;background:#e3e3e3"></div>
<div style="left:654px;top:285px;width:1px;height:15px;background:#e3e3e3"></div>
<span class="t r" style="right:686px;top:286px;transform:scaleX(0.83);">800 (ip)</span>
<span class="t" style="left:77px;top:286px">6 (tcp)</span>
<span class="t" style="left:112px;top:286px">10.10.180.3:51379</span>
<span class="t" style="left:252px;top:286px">10.10.180.1:80 (http)</span>
<span class="t r" style="right:328px;top:286px;">601</span>
<span class="t r" style="right:272px;top:286px;">2.4 kbps</span>
<span class="t r" style="right:217px;top:286px;">2.7 kbps</span>
<span class="t r" style="right:161px;top:286px;">2</span>
<span class="t r" style="right:106px;top:286px;">2</span>
<div style="left:0;top:314px;width:758px;height:1px;background:#e3e3e3"></div>
<div style="left:27px;top:300px;width:1px;height:15px;background:#e3e3e3"></div>
<div style="left:74px;top:300px;width:1px;height:15px;background:#e3e3e3"></div>
<div style="left:109px;top:300px;width:1px;height:15px;background:#e3e3e3"></div>
<div style="left:249px;top:300px;width:1px;height:15px;background:#e3e3e3"></div>
<div style="left:389px;top:300px;width:1px;height:15px;background:#e3e3e3"></div>
<div style="left:434px;top:300px;width:1px;height:15px;background:#e3e3e3"></div>
<div style="left:489px;top:300px;width:1px;height:15px;background:#e3e3e3"></div>
<div style="left:544px;top:300px;width:1px;height:15px;background:#e3e3e3"></div>
<div style="left:599px;top:300px;width:1px;height:15px;background:#e3e3e3"></div>
<div style="left:654px;top:300px;width:1px;height:15px;background:#e3e3e3"></div>
<span class="t r" style="right:686px;top:301px;transform:scaleX(0.83);">800 (ip)</span>
<span class="t" style="left:77px;top:301px">6 (tcp)</span>
<span class="t" style="left:112px;top:301px">10.10.180.3:51380</span>
<span class="t" style="left:252px;top:301px">10.10.180.1:80 (http)</span>
<span class="t r" style="right:328px;top:301px;">601</span>
<span class="t r" style="right:272px;top:301px;">7.8 kbps</span>
<span class="t r" style="right:217px;top:301px;">2.7 kbps</span>
<span class="t r" style="right:161px;top:301px;">3</span>
<span class="t r" style="right:106px;top:301px;">2</span>
<div style="left:0;top:329px;width:758px;height:1px;background:#e3e3e3"></div>
<div style="left:27px;top:315px;width:1px;height:15px;background:#e3e3e3"></div>
<div style="left:74px;top:315px;width:1px;height:15px;background:#e3e3e3"></div>
<div style="left:109px;top:315px;width:1px;height:15px;background:#e3e3e3"></div>
<div style="left:249px;top:315px;width:1px;height:15px;background:#e3e3e3"></div>
<div style="left:389px;top:315px;width:1px;height:15px;background:#e3e3e3"></div>
<div style="left:434px;top:315px;width:1px;height:15px;background:#e3e3e3"></div>
<div style="left:489px;top:315px;width:1px;height:15px;background:#e3e3e3"></div>
<div style="left:544px;top:315px;width:1px;height:15px;background:#e3e3e3"></div>
<div style="left:599px;top:315px;width:1px;height:15px;background:#e3e3e3"></div>
<div style="left:654px;top:315px;width:1px;height:15px;background:#e3e3e3"></div>
<span class="t r" style="right:686px;top:316px;transform:scaleX(0.83);">800 (ip)</span>
<span class="t" style="left:77px;top:316px">6 (tcp)</span>
<span class="t" style="left:112px;top:316px">10.10.180.3:51381</span>
<span class="t" style="left:252px;top:316px">10.10.180.1:80 (http)</span>
<span class="t r" style="right:328px;top:316px;">601</span>
<span class="t r" style="right:272px;top:316px;">2.8 kbps</span>
<span class="t r" style="right:217px;top:316px;">2.7 kbps</span>
<span class="t r" style="right:161px;top:316px;">2</span>
<span class="t r" style="right:106px;top:316px;">2</span>
<div style="left:0;top:344px;width:758px;height:1px;background:#e3e3e3"></div>
<div style="left:27px;top:330px;width:1px;height:15px;background:#e3e3e3"></div>
<div style="left:74px;top:330px;width:1px;height:15px;background:#e3e3e3"></div>
<div style="left:109px;top:330px;width:1px;height:15px;background:#e3e3e3"></div>
<div style="left:249px;top:330px;width:1px;height:15px;background:#e3e3e3"></div>
<div style="left:389px;top:330px;width:1px;height:15px;background:#e3e3e3"></div>
<div style="left:434px;top:330px;width:1px;height:15px;background:#e3e3e3"></div>
<div style="left:489px;top:330px;width:1px;height:15px;background:#e3e3e3"></div>
<div style="left:544px;top:330px;width:1px;height:15px;background:#e3e3e3"></div>
<div style="left:599px;top:330px;width:1px;height:15px;background:#e3e3e3"></div>
<div style="left:654px;top:330px;width:1px;height:15px;background:#e3e3e3"></div>
<span class="t r" style="right:686px;top:331px;transform:scaleX(0.83);">800 (ip)</span>
<span class="t" style="left:77px;top:331px">6 (tcp)</span>
<span class="t" style="left:112px;top:331px">10.10.180.3:51382</span>
<span class="t" style="left:252px;top:331px">10.10.180.1:80 (http)</span>
<span class="t r" style="right:328px;top:331px;">601</span>
<span class="t r" style="right:272px;top:331px;">2.8 kbps</span>
<span class="t r" style="right:217px;top:331px;">2.7 kbps</span>
<span class="t r" style="right:161px;top:331px;">2</span>
<span class="t r" style="right:106px;top:331px;">2</span>
</div>
<div style="left:1000px;top:274px;width:1px;height:339px;background:#a0a0a0;"></div>
<div style="left:1001px;top:274px;width:15px;height:339px;background:#d8d8d8;"></div>
<div style="left:1015px;top:274px;width:1px;height:339px;background:#f4f4f4;"></div>
<div style="left:1001px;top:274px;width:15px;height:14px;background:#f0f0f0;"></div>
<div style="left:1001px;top:274px;width:1px;height:14px;background:#fff;"></div>
<div style="left:1001px;top:288px;width:15px;height:1px;background:#a0a0a0;"></div>
<svg style="left:1005px;top:279px" width="8" height="6" viewBox="0 0 8 6" shape-rendering="crispEdges"><path d="M3 0h2v1h-2zM2 1h4v1h-4zM1 2h6v1h-6zM0 3h8v1h-8zM2 4h4v2h-4z" fill="#000"/></svg>
<div style="left:1001px;top:289px;width:15px;height:150px;background:#f0f0f0;"></div>
<div style="left:1001px;top:289px;width:1px;height:150px;background:#fff;"></div>
<div style="left:1001px;top:439px;width:15px;height:1px;background:#a0a0a0;"></div>
<div style="left:1001px;top:597px;width:15px;height:1px;background:#a0a0a0;"></div>
<div style="left:1001px;top:598px;width:15px;height:15px;background:#f0f0f0;"></div>
<div style="left:1001px;top:598px;width:1px;height:15px;background:#fff;"></div>
<svg style="left:1005px;top:603px" width="8" height="6" viewBox="0 0 8 6" shape-rendering="crispEdges"><path d="M2 0h4v2h-4zM0 2h8v1h-8zM1 3h6v1h-6zM2 4h4v1h-4zM3 5h2v1h-2z" fill="#000"/></svg>
<div style="left:239px;top:614px;width:780px;height:22px;background:#f0f0f0;"></div>
<div style="left:241px;top:614px;width:776px;height:1px;background:#ffffff;"></div>
<div style="left:241px;top:615px;width:1px;height:18px;background:#a0a0a0;"></div>
<div style="left:337px;top:615px;width:1px;height:18px;background:#ffffff;"></div>
<span class="t " style="left:244px;top:618px;color:#000;transform:scaleX(0.905);">45 items</span>
<div style="left:339px;top:615px;width:1px;height:18px;background:#a0a0a0;"></div>
<div style="left:473px;top:615px;width:1px;height:18px;background:#ffffff;"></div>
<span class="t " style="left:342px;top:618px;color:#000;transform:scaleX(0.905);">Total Tx: 98.1 kbps</span>
<div style="left:475px;top:615px;width:1px;height:18px;background:#a0a0a0;"></div>
<div style="left:609px;top:615px;width:1px;height:18px;background:#ffffff;"></div>
<span class="t " style="left:478px;top:618px;color:#000;transform:scaleX(0.905);">Total Rx: 110.6 kbps</span>
<div style="left:611px;top:615px;width:1px;height:18px;background:#a0a0a0;"></div>
<div style="left:810px;top:615px;width:1px;height:18px;background:#ffffff;"></div>
<span class="t " style="left:614px;top:618px;color:#000;transform:scaleX(0.905);">Total Tx Packet: 68</span>
<div style="left:812px;top:615px;width:1px;height:18px;background:#a0a0a0;"></div>
<div style="left:1015px;top:615px;width:1px;height:18px;background:#ffffff;"></div>
<span class="t " style="left:815px;top:618px;color:#000;transform:scaleX(0.905);">Total Rx Packet: 75</span>
<div style="left:239px;top:634px;width:780px;height:1px;background:#ffffff;"></div>
<div style="left:238px;top:636px;width:782px;height:1px;background:#000;"></div>
<div style="left:238px;top:637px;width:35px;height:1px;background:#000;"></div>
<div style="left:273px;top:637px;width:733px;height:1px;background:#444444;"></div>
<div style="left:1006px;top:637px;width:14px;height:1px;background:#9a9a9a;"></div>
</body></html>
